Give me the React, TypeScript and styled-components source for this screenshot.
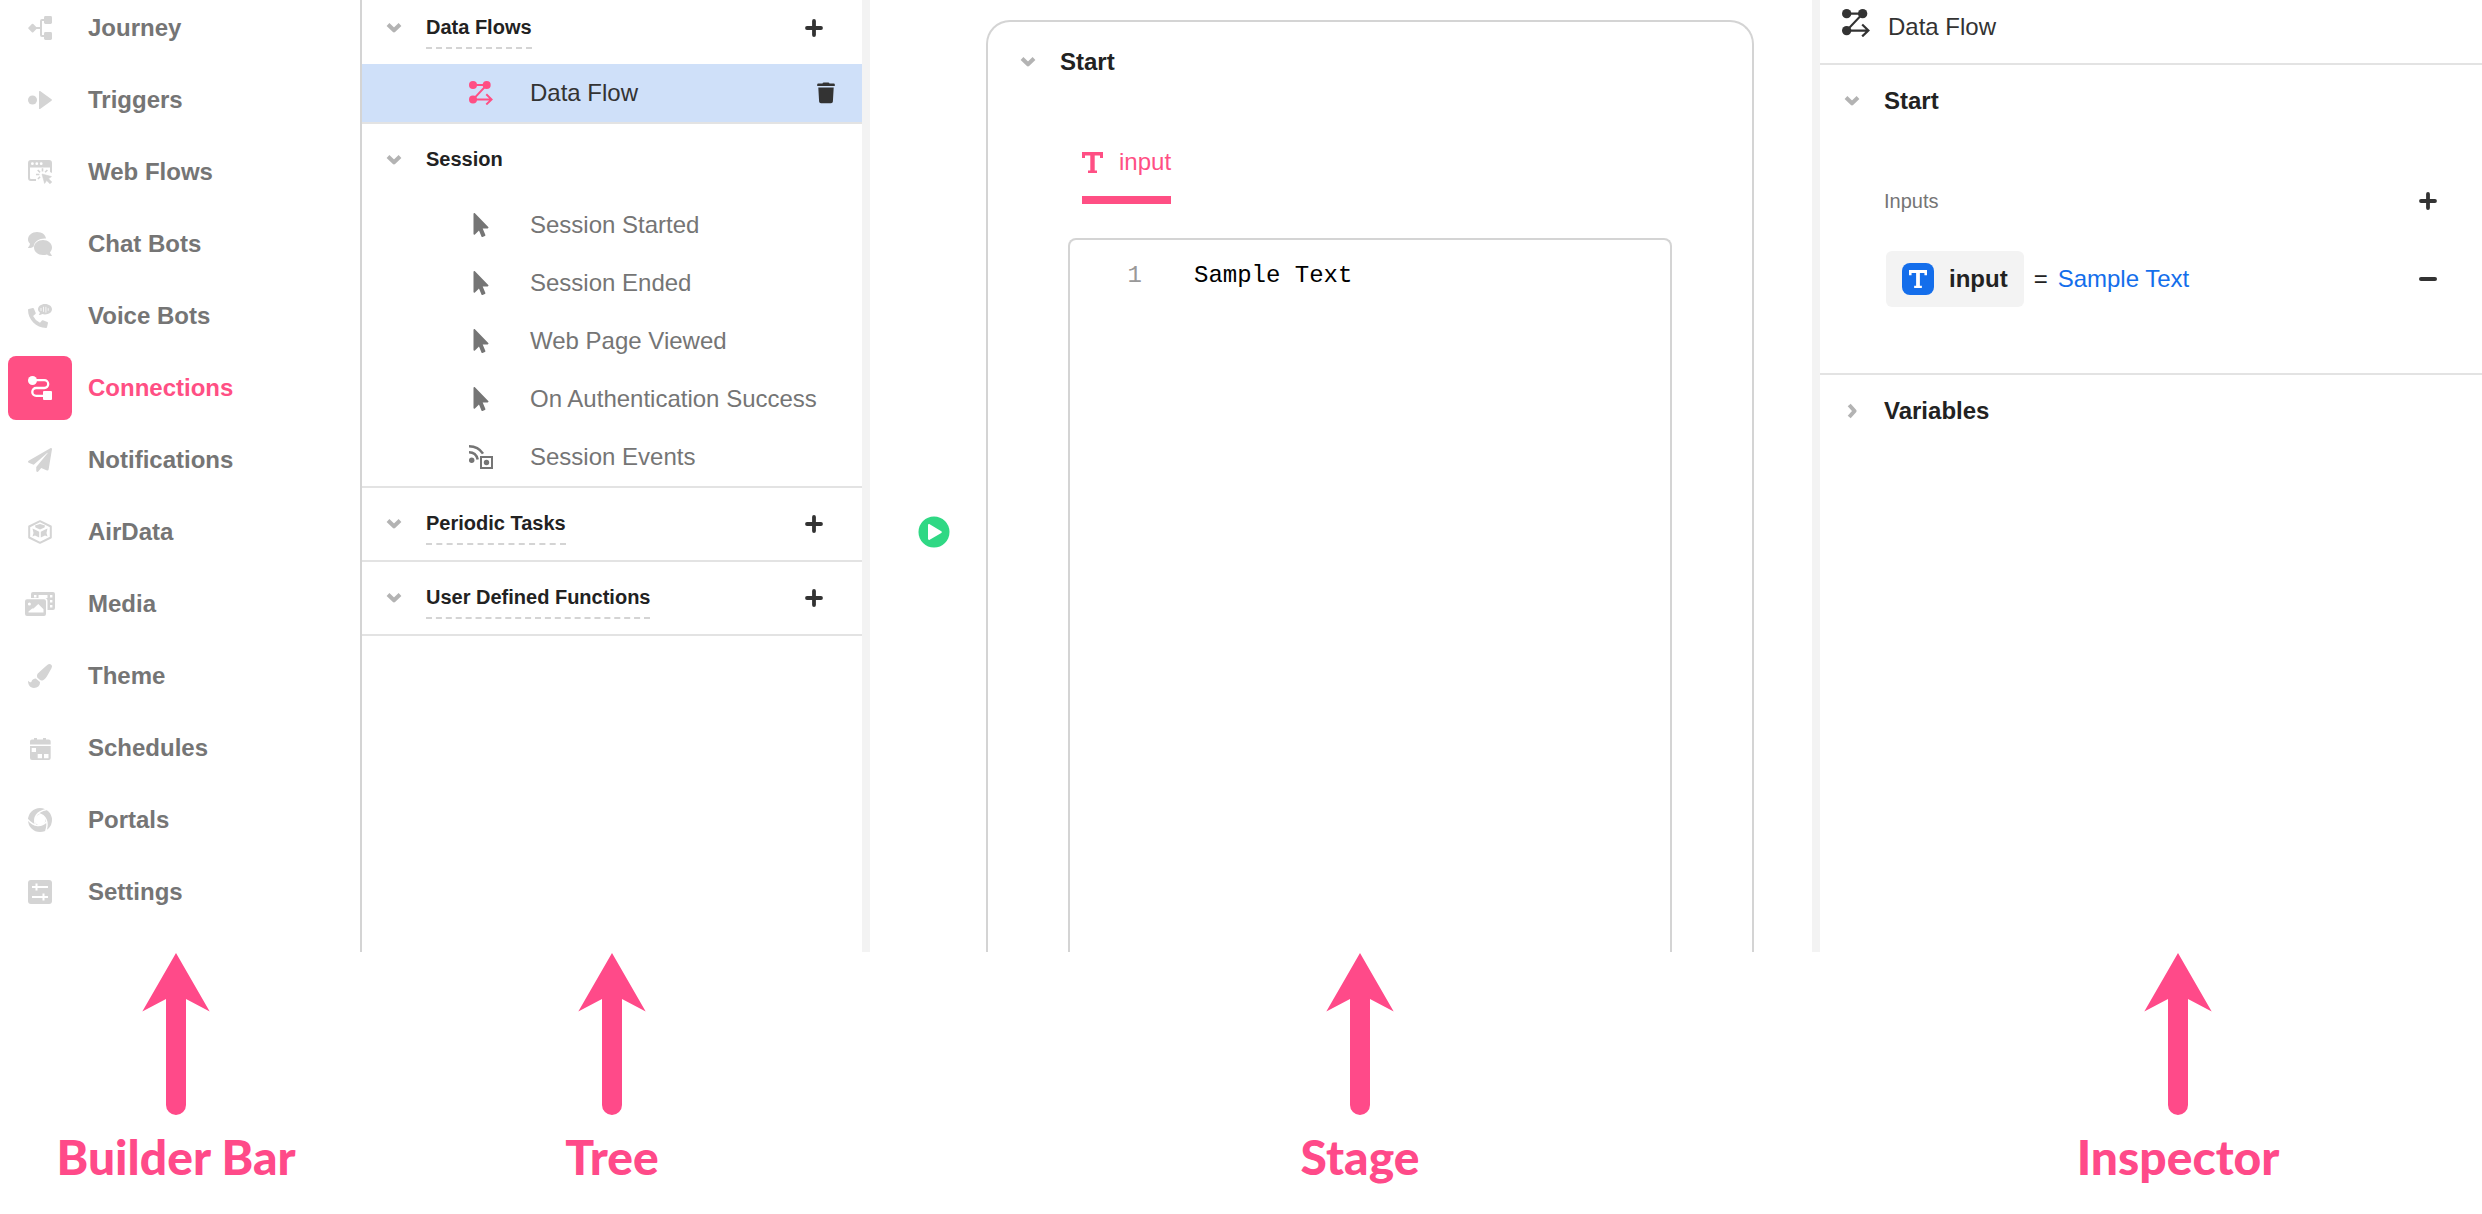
import React from 'react';
import styled, { createGlobalStyle } from 'styled-components';
import { FaMousePointer, FaPaintBrush, FaPaperPlane } from 'react-icons/fa';

const colors = {
  accent: '#ff4f84',
  arrow: '#ff4a89',
  ink: '#222222',
  dark: '#333333',
  muted: '#757575',
  icon: '#d4d4d4',
  chevron: '#b3b3b3',
  line: '#e3e3e3',
  border: '#d4d4d4',
  wash: '#f3f3f3',
  selected: '#cfe0f9',
  blue: '#146eeb',
  green: '#2fd884',
};

const GlobalStyle = createGlobalStyle`
  *, *::before, *::after { box-sizing: border-box; }
  body {
    margin: 0;
    background: #fff;
    color: ${colors.ink};
    font-family: "Liberation Sans", Arial, Helvetica, sans-serif;
    font-size: 24px;
    line-height: 28px;
  }
  h2, h3, ul, p { margin: 0; padding: 0; font-size: inherit; font-weight: inherit; }
  ul { list-style: none; }
  a { color: inherit; text-decoration: none; }
  button { margin: 0; padding: 0; border: 0; background: none; color: inherit; font: inherit; cursor: pointer; }
  svg { display: block; flex: none; }
`;

const Page = styled.div`
  overflow: hidden;
`;

const Workspace = styled.div`
  display: grid;
  grid-template-columns: 360px 510px minmax(0, 1fr) 670px;
  overflow: hidden;
`;

/* ---------- Builder bar ---------- */

const BuilderBar = styled.nav`
  margin-top: -4px;
  padding: 0 8px 28px;
`;

const NavList = styled.ul`
  display: grid;
  gap: 8px;
`;

const NavLink = styled.a<{ $active?: boolean }>`
  display: flex;
  align-items: center;
  gap: 16px;
  height: 64px;
  font-weight: 700;
  color: ${(p) => (p.$active ? colors.accent : colors.muted)};
`;

const NavIcon = styled.span<{ $active?: boolean }>`
  display: flex;
  align-items: center;
  justify-content: center;
  width: 64px;
  height: 64px;
  border-radius: 8px;
  color: ${(p) => (p.$active ? '#fff' : colors.icon)};
  background: ${(p) => (p.$active ? colors.accent : 'transparent')};
`;

/* ---------- Tree ---------- */

const Tree = styled.section`
  border-left: 2px solid ${colors.border};
  border-right: 8px solid ${colors.wash};
`;

const TreeBody = styled.div`
  margin-top: -8px;
`;

const TreeGroup = styled.section`
  border-bottom: 2px solid ${colors.line};
`;

const GroupHead = styled.div`
  display: flex;
  align-items: center;
  gap: 24px;
  height: 72px;
  padding: 0 39px 0 24px;
`;

const GroupTitle = styled.h3<{ $dashed?: boolean }>`
  padding: 8px 0;
  border-bottom: 2px dashed ${(p) => (p.$dashed ? colors.border : 'transparent')};
  font-size: 20px;
  line-height: 24px;
  font-weight: 700;
`;

const PanelTitle = styled.h3`
  font-weight: 700;
`;

const IconButton = styled.button<{ $tone?: string }>`
  display: flex;
  color: ${(p) => p.$tone ?? colors.dark};
`;

const EndButton = styled(IconButton)`
  margin-left: auto;
`;

const TreeRow = styled.li<{ $selected?: boolean }>`
  display: flex;
  align-items: center;
  height: 58px;
  padding: 0 27px 0 107px;
  color: ${(p) => (p.$selected ? colors.dark : colors.muted)};
  background: ${(p) => (p.$selected ? colors.selected : 'transparent')};
`;

const TreeLink = styled.a`
  display: flex;
  align-items: center;
  gap: 37px;
  white-space: nowrap;
`;

const TreeIcon = styled.span<{ $tone?: string }>`
  display: flex;
  justify-content: center;
  width: 24px;
  color: ${(p) => p.$tone ?? 'inherit'};
`;

/* ---------- Stage ---------- */

const Stage = styled.main`
  display: flex;
  align-items: stretch;
  gap: 36px;
  padding: 20px 58px 0 48px;
`;

const PlayButton = styled(IconButton)`
  align-self: flex-start;
  margin-top: 496px;
`;

const Card = styled.section`
  display: flex;
  flex: 1;
  flex-direction: column;
  min-width: 0;
  border: 2px solid ${colors.border};
  border-bottom: 0;
  border-radius: 24px 24px 0 0;
`;

const CardHead = styled.div`
  display: flex;
  align-items: center;
  gap: 24px;
  height: 80px;
  padding: 0 32px;
`;

const Tabs = styled.div`
  display: flex;
  padding: 46px 94px 34px;
`;

const Tab = styled.button`
  display: flex;
  align-items: center;
  gap: 16px;
  padding-bottom: 20px;
  border-bottom: 8px solid ${colors.accent};
  color: ${colors.accent};
`;

const Editor = styled.div`
  display: grid;
  flex: 1;
  grid-template-columns: 72px minmax(0, 1fr);
  gap: 52px;
  margin: 0 80px;
  padding-top: 20px;
  border: 2px solid ${colors.border};
  border-bottom: 0;
  border-radius: 8px 8px 0 0;
  font-family: "Liberation Mono", "Courier New", monospace;
  line-height: 32px;
`;

const LineNumber = styled.span`
  color: #999;
  text-align: right;
`;

const CodeInput = styled.textarea`
  padding: 0;
  border: 0;
  outline: 0;
  resize: none;
  background: none;
  color: #000;
  font: inherit;
`;

/* ---------- Inspector ---------- */

const Inspector = styled.aside`
  border-left: 8px solid ${colors.wash};
`;

const InspectorHead = styled.header`
  display: flex;
  align-items: flex-start;
  gap: 18px;
  padding: 9px 22px 22px;
  border-bottom: 2px solid ${colors.line};
  color: ${colors.dark};
`;

const InspectorTitle = styled.h2`
  padding-top: 4px;
`;

const InspectorSection = styled.section`
  & + & {
    border-top: 2px solid ${colors.line};
  }
`;

const SectionBody = styled.div`
  display: grid;
  gap: 30px;
  padding: 44px 45px 66px 64px;
`;

const FieldHead = styled.div`
  display: flex;
  align-items: center;
  height: 40px;
  font-size: 20px;
  color: ${colors.muted};
`;

const FieldRow = styled.div`
  display: flex;
  align-items: center;
  gap: 10px;
  padding-left: 2px;
`;

const Pill = styled.span`
  display: flex;
  align-items: center;
  gap: 15px;
  height: 56px;
  padding: 0 16px;
  border-radius: 6px;
  background: ${colors.wash};
  font-weight: 700;
`;

const TypeBadge = styled.span`
  display: flex;
  align-items: center;
  justify-content: center;
  width: 32px;
  height: 32px;
  border-radius: 8px;
  color: #fff;
  background: ${colors.blue};
`;

const ValueLink = styled.a`
  color: ${colors.blue};
`;

/* ---------- Captions ---------- */

const Captions = styled.div`
  display: grid;
  grid-template-columns: 352px 468px minmax(0, 1fr) 608px;
  gap: 26px;
  padding: 1px 0 24px;
`;

const Caption = styled.div`
  display: grid;
  justify-items: center;
  gap: 12px;
  color: ${colors.arrow};
`;

const CaptionLabel = styled.p`
  font-family: Lato, "Open Sans", sans-serif;
  font-size: 48px;
  line-height: 60px;
  font-weight: 900;
  white-space: nowrap;
`;

/* ---------- Drawings ---------- */

type IconProps = { children: React.ReactNode; width?: number; height?: number; box?: string };

const Svg = ({ children, width = 24, height = 24, box }: IconProps) => (
  <svg width={width} height={height} viewBox={box ?? `0 0 ${width} ${height}`} fill="currentColor" aria-hidden="true">
    {children}
  </svg>
);

const JourneyIcon = () => (
  <Svg>
    <rect x="1.2" y="8.7" width="6.8" height="6.8" rx="1" transform="rotate(45 4.6 12.1)" />
    <rect x="16" y="0" width="8" height="8" rx="1.4" />
    <rect x="16" y="16" width="8" height="8" rx="1.4" />
    <path d="M8 12h5M17 4h-3a1 1 0 0 0-1 1v14a1 1 0 0 0 1 1h3" fill="none" stroke="currentColor" strokeWidth="2" />
  </Svg>
);

const TriggersIcon = () => (
  <Svg>
    <circle cx="4.5" cy="12" r="4.5" />
    <path d="M11 3.6c0-.6.6-.9 1.1-.5l11.4 8.2a.9.9 0 0 1 0 1.4l-11.4 8.2c-.5.4-1.1.1-1.1-.5z" />
  </Svg>
);

const WebFlowsIcon = () => (
  <Svg>
    <path
      fillRule="evenodd"
      d="M3 0h18a3 3 0 0 1 3 3v10l-2-1V7.5H2V18a1 1 0 0 0 1 1h5v2H3a3 3 0 0 1-3-3V3a3 3 0 0 1 3-3zm1.4 2.3a1.4 1.4 0 1 0 0 2.8 1.4 1.4 0 0 0 0-2.8zm4.4 0a1.4 1.4 0 1 0 0 2.8 1.4 1.4 0 0 0 0-2.8zm4.4 0a1.4 1.4 0 1 0 0 2.8 1.4 1.4 0 0 0 0-2.8z"
    />
    <path d="M14 14l9.5 2.6-3 2.1 3.3 3.3-1.8 1.8-3.3-3.3-2.1 3z" stroke="currentColor" strokeWidth=".6" />
    <path d="M14.500 8.300v3.200M8 14.500h3.400M9.700 10l2.400 2.300M19.400 10l-2.300 2.300M9.900 19l2.200-2.200" fill="none" stroke="currentColor" strokeWidth="1.6" />
  </Svg>
);

const ChatIcon = () => (
  <Svg>
    <path d="M9 0c5 0 8.600 2.800 9 6.500-6.200-.6-12 3-12.300 8C3.900 15.700 2 16.300.3 16c-.4-.1-.4-.5-.1-.8.900-1 1.600-2.100 1.800-3.500C.7 10.700 0 9.200 0 7.500 0 3.400 4 0 9 0z" />
    <path d="M15 8c5 0 9 3.400 9 7.500 0 1.800-.7 3.400-2 4.700.2 1.200.9 2.100 1.700 2.900.4.400.2.900-.3.900-1.600 0-3.200-.7-4.400-1.600-1.200.4-2.600.6-4 .6-5 0-9-3.400-9-7.500S10 8 15 8z" />
  </Svg>
);

const VoiceIcon = () => (
  <Svg>
    <path
      transform="translate(0 4) scale(.039)"
      d="M497.39 361.8l-112-48a24 24 0 0 0-28 6.9l-49.6 60.6A370.66 370.66 0 0 1 130.6 204.11l60.6-49.6a23.94 23.94 0 0 0 6.9-28l-48-112A24.16 24.16 0 0 0 122.6.61l-104 24A24 24 0 0 0 0 48c0 256.5 207.9 464 464 464a24 24 0 0 0 23.4-18.6l24-104a24.29 24.29 0 0 0-14.01-27.6z"
    />
    <path d="M17 0c4 0 7 2.300 7 5.300s-3 5.200-7 5.200c-1 0-2-.1-2.800-.4-1 .7-2.200 1-3.400.9.600-.7 1-1.500 1.100-2.400C10.700 7.700 10 6.600 10 5.300 10 2.300 13 0 17 0z" />
    <path d="M13 4v3M15.500 2.800v5M17.900 2.800v5.800M20.200 4.200v2.600" stroke="#fff" strokeWidth=".8" />
  </Svg>
);

const ConnectionsIcon = () => (
  <Svg>
    <circle cx="4.5" cy="4.5" r="4.5" />
    <path d="M7 4.2h9.3a3.9 3.9 0 0 1 0 7.8H8.2a3.9 3.9 0 0 0 0 7.8H16" fill="none" stroke="currentColor" strokeWidth="2.3" />
    <rect x="15" y="15" width="9" height="9" rx="1" />
  </Svg>
);

const AirDataIcon = () => (
  <Svg>
    <path d="M12 1.200l10.800 5.300v11L12 22.800 1.200 17.500v-11z" fill="none" stroke="currentColor" strokeWidth="2" strokeLinejoin="round" />
    <path d="M7 5.500l5-1.500 5 1.500-.5 2L12 9.600 7.500 7.500zM4.500 8.500l2.300 1 4.400 2.200v5.800l-4.200-2-2.500 1 1-3.500zM19.500 8.500l-2.300 1-4.400 2.200v5.800l4.200-2 2.500 1-1-3.500z" />
  </Svg>
);

const MediaIcon = () => (
  <Svg width={30}>
    <path
      fillRule="evenodd"
      d="M8 0h20a2 2 0 0 1 2 2v14a2 2 0 0 1-2 2h-5.500V9a3 3 0 0 0-2-3H6V2a2 2 0 0 1 2-2zm1 3v2.500h2.500V3zm4.500 0v3h9V3zM25 3v2.400h2.400V3zm0 5v2.400h2.400V8zm0 5v2.400h2.400V13z"
    />
    <path
      fillRule="evenodd"
      d="M2 7.300h17a2 2 0 0 1 2 2V22a2 2 0 0 1-2 2H2a2 2 0 0 1-2-2V9.300a2 2 0 0 1 2-2zm2.400 3.200a1.500 1.500 0 1 0 0 3 1.500 1.500 0 0 0 0-3zM3.500 20.500h15v-3.300L13.300 12l-4.800 4.500H7.200l-3.700 3z"
    />
  </Svg>
);

const SchedulesIcon = () => (
  <Svg>
    <path d="M6 3.500V2h3v1.500h6V2h3v1.500h2.700a2 2 0 0 1 2 2v3H2v-3a2 2 0 0 1 2-2z" />
    <path fillRule="evenodd" d="M2 10h20.700v12a2 2 0 0 1-2 2H4a2 2 0 0 1-2-2zm1.700 2v4H8v-4zm6 6v4.200H14V18zm6.300 0v4.200h4.500V18z" />
  </Svg>
);

const PortalsIcon = () => (
  <Svg>
    <circle cx="12" cy="12" r="8.7" fill="none" stroke="currentColor" strokeWidth="6.600" />
    {[0, 120, 240].map((angle) => (
      <path key={angle} d="M7.400 17C5 9 9 3.500 18.600 1.500" transform={`rotate(${angle} 12 12)`} fill="none" stroke="#fff" strokeWidth="1.400" />
    ))}
  </Svg>
);

const SettingsIcon = () => (
  <Svg>
    <rect width="24" height="24" rx="3" />
    <path d="M4 7h16M8.500 3.500v7M4 17h16M15.500 13.500v7" stroke="#fff" strokeWidth="2" />
  </Svg>
);

const DataFlowIcon = ({ size }: { size: number }) => (
  <Svg width={size} height={size} box="0 0 24 24">
    <circle cx="4" cy="4" r="4" />
    <circle cx="17.700" cy="4" r="4" />
    <circle cx="4" cy="18.500" r="4" />
    <path d="M4 4h13.700L4 18.500h18.500M17.300 13.300l5.300 5.200-5.300 5" fill="none" stroke="currentColor" strokeWidth="1.900" />
  </Svg>
);

const SessionEventsIcon = () => (
  <Svg>
    <circle cx="2.700" cy="15.300" r="2.700" />
    <path d="M0 1.300C6 1.300 11 4 14 8.700M0 7.300c4 0 7.600 2.500 8.700 7.200" fill="none" stroke="currentColor" strokeWidth="2.500" />
    <rect x="12" y="12" width="11" height="11" fill="none" stroke="currentColor" strokeWidth="2" />
    <circle cx="17.500" cy="17.500" r="2.700" />
  </Svg>
);

const ChevronIcon = ({ open = true }: { open?: boolean }) => (
  <svg width="16" height="16" viewBox="0 0 16 16" aria-hidden="true">
    <path
      d={open ? 'M2 4.500l6 5.800 6-5.800' : 'M5.200 2l5.400 6-5.400 6'}
      fill="none"
      stroke="currentColor"
      strokeWidth="4"
      strokeLinejoin="round"
    />
  </svg>
);

const PlusIcon = () => (
  <Svg width={18} height={18}>
    <path d="M9 2v14M2 9h14" stroke="currentColor" strokeWidth="3.800" strokeLinecap="round" />
  </Svg>
);

const MinusIcon = () => (
  <Svg width={18} height={18}>
    <path d="M2 9h14" stroke="currentColor" strokeWidth="4" strokeLinecap="round" />
  </Svg>
);

const TrashIcon = () => (
  <Svg width={18} height={22}>
    <path d="M5.500 1.600Q5.700.5 6.800.5h4.400q1.100 0 1.300 1.100h4.300q1 0 1 1v1.400H.2V2.600q0-1 1-1zM1.300 5.500h15.400l-.8 13.900q-.1 1.800-1.900 1.800H4q-1.800 0-1.900-1.800z" />
  </Svg>
);

const TextTypeIcon = ({ size }: { size: number }) => (
  <Svg width={size} height={size} box="0 0 21 21">
    <path d="M0 0h21v6h-3V3.500h-5.300v15H15V21H6v-2.500h2.300v-15H3V6H0z" />
  </Svg>
);

const PlayIcon = () => (
  <Svg width={32} height={32}>
    <circle cx="16" cy="16" r="15.500" />
    <path d="M10 9.300c0-1 .9-1.500 1.700-1l11.600 6.900a1 1 0 0 1 0 1.700l-11.600 6.900c-.8.500-1.700 0-1.700-1z" fill="#fff" />
  </Svg>
);

const ArrowDrawing = () => (
  <Svg width={68} height={162}>
    <path d="M34 0L67.700 58.500 44 46V152a10 10 0 0 1-20 0V46L.3 58.500z" />
  </Svg>
);

/* ---------- Data ---------- */

const navItems = [
  { label: 'Journey', icon: <JourneyIcon /> },
  { label: 'Triggers', icon: <TriggersIcon /> },
  { label: 'Web Flows', icon: <WebFlowsIcon /> },
  { label: 'Chat Bots', icon: <ChatIcon /> },
  { label: 'Voice Bots', icon: <VoiceIcon /> },
  { label: 'Connections', icon: <ConnectionsIcon />, active: true },
  { label: 'Notifications', icon: <FaPaperPlane size={24} /> },
  { label: 'AirData', icon: <AirDataIcon /> },
  { label: 'Media', icon: <MediaIcon /> },
  { label: 'Theme', icon: <FaPaintBrush size={24} /> },
  { label: 'Schedules', icon: <SchedulesIcon /> },
  { label: 'Portals', icon: <PortalsIcon /> },
  { label: 'Settings', icon: <SettingsIcon /> },
];

type TreeItem = { label: string; icon: React.ReactNode; selected?: boolean };
type TreeSection = { title: string; addable: boolean; items: TreeItem[] };

const pointer = <FaMousePointer size={24} />;

const treeSections: TreeSection[] = [
  { title: 'Data Flows', addable: true, items: [{ label: 'Data Flow', icon: <DataFlowIcon size={24} />, selected: true }] },
  {
    title: 'Session',
    addable: false,
    items: [
      { label: 'Session Started', icon: pointer },
      { label: 'Session Ended', icon: pointer },
      { label: 'Web Page Viewed', icon: pointer },
      { label: 'On Authentication Success', icon: pointer },
      { label: 'Session Events', icon: <SessionEventsIcon /> },
    ],
  },
  { title: 'Periodic Tasks', addable: true, items: [] },
  { title: 'User Defined Functions', addable: true, items: [] },
];

const captions = ['Builder Bar', 'Tree', 'Stage', 'Inspector'];

export default function App() {
  const [code, setCode] = React.useState('Sample Text');

  return (
    <Page>
      <GlobalStyle />
      <Workspace>
        <BuilderBar aria-label="Builder Bar">
          <NavList>
            {navItems.map((item) => (
              <li key={item.label}>
                <NavLink href="#" $active={item.active} aria-current={item.active ? 'page' : undefined}>
                  <NavIcon $active={item.active}>{item.icon}</NavIcon>
                  {item.label}
                </NavLink>
              </li>
            ))}
          </NavList>
        </BuilderBar>

        <Tree aria-label="Tree">
          <TreeBody>
            {treeSections.map((section) => (
              <TreeGroup key={section.title}>
                <GroupHead>
                  <IconButton $tone={colors.chevron} aria-label={`Toggle ${section.title}`}>
                    <ChevronIcon />
                  </IconButton>
                  <GroupTitle $dashed={section.addable}>{section.title}</GroupTitle>
                  {section.addable && (
                    <EndButton aria-label={`Add to ${section.title}`}>
                      <PlusIcon />
                    </EndButton>
                  )}
                </GroupHead>
                {section.items.length > 0 && (
                  <ul>
                    {section.items.map((item) => (
                      <TreeRow key={item.label} $selected={item.selected}>
                        <TreeLink href="#">
                          <TreeIcon $tone={item.selected ? colors.accent : undefined}>{item.icon}</TreeIcon>
                          {item.label}
                        </TreeLink>
                        {item.selected && (
                          <EndButton aria-label={`Delete ${item.label}`}>
                            <TrashIcon />
                          </EndButton>
                        )}
                      </TreeRow>
                    ))}
                  </ul>
                )}
              </TreeGroup>
            ))}
          </TreeBody>
        </Tree>

        <Stage>
          <PlayButton $tone={colors.green} aria-label="Run">
            <PlayIcon />
          </PlayButton>
          <Card>
            <CardHead>
              <IconButton $tone={colors.chevron} aria-label="Toggle Start">
                <ChevronIcon />
              </IconButton>
              <PanelTitle>Start</PanelTitle>
            </CardHead>
            <Tabs role="tablist">
              <Tab role="tab" aria-selected="true">
                <TextTypeIcon size={21} />
                input
              </Tab>
            </Tabs>
            <Editor>
              <LineNumber>1</LineNumber>
              <CodeInput aria-label="input" spellCheck={false} value={code} onChange={(e) => setCode(e.target.value)} />
            </Editor>
          </Card>
        </Stage>

        <Inspector aria-label="Inspector">
          <InspectorHead>
            <DataFlowIcon size={28} />
            <InspectorTitle>Data Flow</InspectorTitle>
          </InspectorHead>
          <InspectorSection>
            <GroupHead>
              <IconButton $tone={colors.chevron} aria-label="Toggle Start">
                <ChevronIcon />
              </IconButton>
              <PanelTitle>Start</PanelTitle>
            </GroupHead>
            <SectionBody>
              <FieldHead>
                Inputs
                <EndButton aria-label="Add input">
                  <PlusIcon />
                </EndButton>
              </FieldHead>
              <FieldRow>
                <Pill>
                  <TypeBadge>
                    <TextTypeIcon size={18} />
                  </TypeBadge>
                  input
                </Pill>
                <span>=</span>
                <ValueLink href="#">{code}</ValueLink>
                <EndButton aria-label="Remove input">
                  <MinusIcon />
                </EndButton>
              </FieldRow>
            </SectionBody>
          </InspectorSection>
          <InspectorSection>
            <GroupHead>
              <IconButton $tone={colors.chevron} aria-label="Toggle Variables">
                <ChevronIcon open={false} />
              </IconButton>
              <PanelTitle>Variables</PanelTitle>
            </GroupHead>
          </InspectorSection>
        </Inspector>
      </Workspace>

      <Captions>
        {captions.map((label) => (
          <Caption key={label}>
            <ArrowDrawing />
            <CaptionLabel>{label}</CaptionLabel>
          </Caption>
        ))}
      </Captions>
    </Page>
  );
}
